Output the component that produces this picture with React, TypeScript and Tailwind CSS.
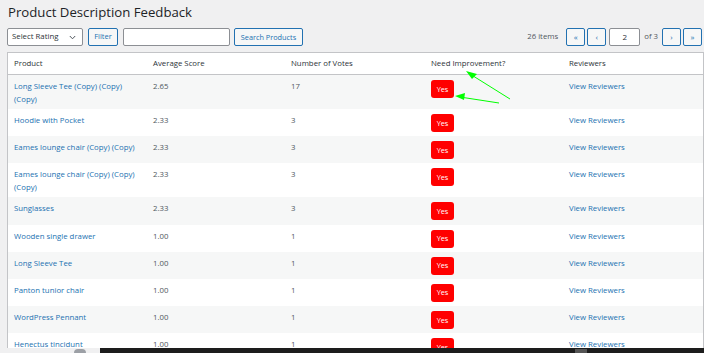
import React from "react";

const rows = [
  { name: "Long Sleeve Tee (Copy) (Copy) (Copy)", score: "2.65", votes: "17" },
  { name: "Hoodie with Pocket", score: "2.33", votes: "3" },
  { name: "Eames lounge chair (Copy) (Copy)", score: "2.33", votes: "3" },
  { name: "Eames lounge chair (Copy) (Copy) (Copy)", score: "2.33", votes: "3" },
  { name: "Sunglasses", score: "2.33", votes: "3" },
  { name: "Wooden single drawer", score: "1.00", votes: "1" },
  { name: "Long Sleeve Tee", score: "1.00", votes: "1" },
  { name: "Panton tunior chair", score: "1.00", votes: "1" },
  { name: "WordPress Pennant", score: "1.00", votes: "1" },
  { name: "Henectus tincidunt", score: "1.00", votes: "1" },
];

function PagerButton({ label }: { label: string }) {
  return (
    <button className="w-[19px] h-[18px] border border-[#2271b1] rounded-[2px] bg-[#f6f7f7] text-[#2271b1] text-[8px] leading-none flex items-center justify-center">
      {label}
    </button>
  );
}

export default function App() {
  return (
    <div
      className="relative w-[704px] h-[353px] overflow-hidden bg-[#f0f0f1] text-[#2c3338]"
      style={{ fontFamily: "'Open Sans', 'Liberation Sans', sans-serif" }}
    >
      <h1 className="pl-[8px] pt-[1px] text-[13.2px] leading-[22px] text-[#1d2327]">Product Description Feedback</h1>

      <div className="flex items-center mt-[5px] pl-[7px] pr-[2px] h-[18px]">
        <div className="w-[76px] h-[18px] bg-white border border-[#8c8f94] rounded-[2px] flex items-center justify-between px-[4px] text-[7.8px]">
          <span>Select Rating</span>
          <svg width="7" height="5" viewBox="0 0 7 5" className="mr-[2px]">
            <path d="M0.8 1 L3.5 3.8 L6.2 1" fill="none" stroke="#50575e" strokeWidth="1" />
          </svg>
        </div>
        <button className="ml-[5px] w-[30px] h-[18px] border border-[#2271b1] rounded-[2px] bg-[#f6f7f7] text-[#2271b1] text-[7.5px]">
          Filter
        </button>
        <div className="ml-[5px] w-[107px] h-[18px] bg-white border border-[#8c8f94] rounded-[2px]" />
        <button className="ml-[4px] w-[69px] h-[18px] border border-[#2271b1] rounded-[2px] bg-[#f6f7f7] text-[#2271b1] text-[7.3px]">
          Search Products
        </button>
        <div className="ml-auto flex items-center gap-[2px]">
          <span className="text-[7.8px] text-[#50575e] mr-[6px]">26 items</span>
          <PagerButton label="«" />
          <PagerButton label="‹" />
          <div className="ml-[1px] w-[31px] h-[18px] bg-white border border-[#8c8f94] rounded-[2px] flex items-center justify-center text-[8px]">
            2
          </div>
          <span className="text-[7.8px] text-[#50575e] mx-[2px]">of 3</span>
          <PagerButton label="›" />
          <PagerButton label="»" />
        </div>
      </div>

      <div className="ml-[7px] mt-[6px] bg-white border border-[#c3c4c7] text-[7.8px]">
        <div className="grid grid-cols-[139px_138px_140px_138px_1fr] h-[22px] items-center border-b border-[#c3c4c7] pl-[6px] text-[#2c3338]">
          <span>Product</span>
          <span>Average Score</span>
          <span>Number of Votes</span>
          <span>Need Improvement?</span>
          <span>Reviewers</span>
        </div>
        {rows.map((r, i) => (
          <div
            key={i}
            className={`grid grid-cols-[139px_138px_140px_138px_1fr] pl-[6px] pt-[5px] pb-[3px] min-h-[27.2px] ${
              i % 2 === 0 ? "bg-[#f6f7f7]" : "bg-white"
            }`}
          >
            <span className="text-[#2271b1] leading-[13px] pr-[12px]">{r.name}</span>
            <span className="text-[#50575e] leading-[13px]">{r.score}</span>
            <span className="text-[#50575e] leading-[13px]">{r.votes}</span>
            <span>
              <span className="inline-flex w-[23px] h-[18px] rounded-[3px] bg-[#ff0000] text-white items-center justify-center text-[7.3px]">
                Yes
              </span>
            </span>
            <span className="text-[#2271b1] leading-[13px]">View Reviewers</span>
          </div>
        ))}
      </div>

      <svg className="absolute left-0 top-0 pointer-events-none" width="704" height="353">
        <line x1="510" y1="99" x2="470" y2="74" stroke="#00ff00" strokeWidth="1" />
        <polygon points="466,71 477,74 472,79" fill="#00ff00" />
        <line x1="499" y1="103" x2="460" y2="97" stroke="#00ff00" strokeWidth="1" />
        <polygon points="455,96 465,93 464,100" fill="#00ff00" />
      </svg>

      <div className="absolute left-0 bottom-0 w-[704px] h-[5px] flex">
        <div className="w-[100px] h-full bg-[#f0f0f1] relative">
          <div className="absolute left-[74px] top-[1px] w-[12px] h-[8px] rounded-full bg-[#9ca0a6]" />
        </div>
        <div className="flex-1 h-full bg-[#1d1d1d] relative">
          <div className="absolute left-[475px] top-[1px] w-[12px] h-[4px] bg-[#555]" />
        </div>
      </div>
    </div>
  );
}
